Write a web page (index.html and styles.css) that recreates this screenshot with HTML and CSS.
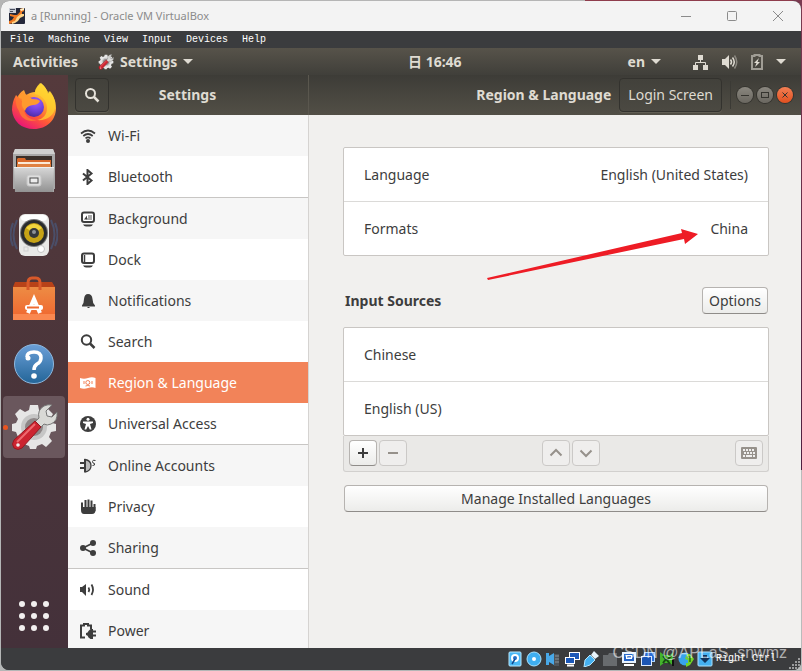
FILE: index.html
```
<!DOCTYPE html>
<html lang="en">
<head>
    <meta charset="utf-8">
    <meta name="viewport" content="width=device-width, initial-scale=1">
    <title>a [Running] - Oracle VM VirtualBox</title>
    <link rel="stylesheet" href="styles.css">
</head>
<body>
<div class="window">

    <!-- host window -->
    <header class="titlebar">
        <svg class="vm-logo" width="16" height="16" viewBox="0 0 16 16">
            <rect width="16" height="16" rx="1" fill="#25283a"/>
            <path d="M0 0h7v5H0z" fill="#c9ccd4"/>
            <path d="M1 1.500h5M1 3.500h3" stroke="#4a5060"/>
            <path d="M1 6l4 1h3l3-3V1l4-1v3l-2 1v3l-4 3-2 3-3 2-4 1v-3l3-1 2-3-4-1z" fill="#f07a22"/>
            <path d="M3 14l3-1 2-4 4-3 3 0v2l-4 2-2 3-3 2-3 1z" fill="#ffd58a"/>
            <path d="M11 1l4-1v2l-3 1z" fill="#fff0c8"/>
        </svg>
        <span class="titlebar-text">a [Running] - Oracle VM VirtualBox</span>
        <button class="win-btn" aria-label="Minimize">
            <svg width="12" height="12" viewBox="0 0 12 12"><path d="M1 6.500h10"/></svg>
        </button>
        <button class="win-btn" aria-label="Maximize">
            <svg width="12" height="12" viewBox="0 0 12 12"><rect x="1.500" y="1.500" width="9" height="9" rx="1"/></svg>
        </button>
        <button class="win-btn" aria-label="Close">
            <svg width="12" height="12" viewBox="0 0 12 12"><path d="M1 1l10 10M11 1L1 11"/></svg>
        </button>
    </header>

    <nav class="menubar">
        <button>File</button>
        <button>Machine</button>
        <button>View</button>
        <button>Input</button>
        <button>Devices</button>
        <button>Help</button>
    </nav>

    <!-- guest top bar -->
    <div class="topbar">
        <div class="topbar-left">
            <button class="top-btn">Activities</button>
            <button class="top-btn app-menu">
                <svg width="16" height="16" viewBox="0 0 48 48"><use href="#i-settings"/></svg>
                Settings
                <i class="caret"></i>
            </button>
        </div>
        <button class="top-btn clock">日 16:46</button>
        <div class="topbar-right">
            <button class="top-btn lang">en <i class="caret"></i></button>
            <button class="top-btn tray" aria-label="System menu">
                <svg width="16" height="16" viewBox="0 0 16 16">
                    <path d="M5 1h5v5H5zM0 11h5v5H0zM10 11h5v5h-5z" fill="#dfdbd2"/>
                    <path d="M7.500 6v3M2.500 11V8.500h10V11" fill="none" stroke="#dfdbd2"/>
                </svg>
                <svg width="16" height="16" viewBox="0 0 16 16">
                    <path d="M0 5h3l4-4v14l-4-4H0z" fill="#dfdbd2"/>
                    <path d="M8.500 5.500q2 2.500 0 5M10.500 3.500q3.500 4.500 0 9" fill="none" stroke="#dfdbd2" stroke-width="1.500"/>
                    <path d="M12.500 1.500q4.500 6.500 0 13" fill="none" stroke="#8b8880" stroke-width="1.500"/>
                </svg>
                <svg width="12" height="16" viewBox="0 0 12 16">
                    <path d="M3.500 2V1h5v1H11v13H1V2z" fill="none" stroke="#a09d95" stroke-width="2"/>
                    <path d="M8 4L3 9h2.500L4 13l5-5H6.500z" fill="#dfdbd2"/>
                </svg>
                <i class="caret"></i>
            </button>
        </div>
    </div>

    <div class="desktop">
        <aside class="dock">
            <a href="#" class="dock-item" aria-label="Firefox">
                <svg width="48" height="48" viewBox="0 0 48 48">
                    <defs>
                        <linearGradient id="ff" x1=".85" y1="0" x2=".25" y2="1">
                            <stop offset="0" stop-color="#fff44f"/><stop offset=".35" stop-color="#ffb030"/>
                            <stop offset=".65" stop-color="#ff5a36"/><stop offset="1" stop-color="#e8107c"/>
                        </linearGradient>
                        <radialGradient id="ffg" cx=".6" cy=".25" r=".8">
                            <stop offset="0" stop-color="#a35bff"/><stop offset=".6" stop-color="#6a3fd8"/><stop offset="1" stop-color="#4a2a9c"/>
                        </radialGradient>
                    </defs>
                    <path d="M6 12q-4 7-4 15c1 11 9 19 22 19s22-9 22-21c0-8-3-13-7-17l-1 3Q37 5 31 0q-5 4-6 9-2 0-5 1l-4 2-2-5q-5 3-6 7z" fill="url(#ff)"/>
                    <path d="M30 0q-6 6-5 11c5 1 12 5 12 14 0 7-4 11-10 12 9 1 17-4 18-12 1-7-2-13-5-17l-1 3Q36 4 30 0z" fill="#ffd32e" opacity=".75"/>
                    <circle cx="24" cy="24" r="10" fill="url(#ffg)"/>
                    <path d="M8 13q4-4 9-1l5 4q6 0 8 2-2 4-7 4-7 1-8 6-5-4-3-10-3-2-4-5z" fill="#ff9a2e"/>
                    <path d="M6 14q-1 9 3 14c2 8 10 12 18 9-7 0-13-4-13-11-3-4-3-8-2-10z" fill="#ff7a32" opacity=".8"/>
                </svg>
            </a>
            <a href="#" class="dock-item" aria-label="Files">
                <svg width="48" height="48" viewBox="0 0 48 48">
                    <defs>
                        <linearGradient id="fl" x1="0" y1="0" x2="0" y2="1"><stop offset="0" stop-color="#d8d8d8"/><stop offset="1" stop-color="#929292"/></linearGradient>
                    </defs>
                    <path d="M5 2h38l2 5v35h-1v3H5v-3H3V7z" fill="#a8a8a8"/>
                    <path d="M5 2h38l2 5H3z" fill="#cfcfcf"/>
                    <path d="M6 9h36v11H6z" fill="#3a302b"/>
                    <path d="M8 11h7l1 2h25v8H7v-9z" fill="#d8682a"/>
                    <path d="M8 15h32v2H8z" fill="#fbe8d4"/><path d="M7 17h34v3H7z" fill="#e08040"/>
                    <path d="M4 20h40l-1 25H5z" fill="url(#fl)"/>
                    <path d="M4 20.500h40" stroke="#efefef"/>
                    <rect x="17" y="28" width="14" height="11" rx="2" fill="#dedede" stroke="#c6c6c6"/>
                    <rect x="20" y="31" width="8" height="5" fill="#ececec" stroke="#4a4a4a"/>
                </svg>
            </a>
            <a href="#" class="dock-item" aria-label="Rhythmbox">
                <svg width="48" height="48" viewBox="0 0 48 48">
                    <g fill="none" stroke="#456596" stroke-width="2" opacity=".5">
                        <path d="M7 9q-7 15 0 29M3 12q-5 12 0 23M41 9q7 15 0 29M45 12q5 12 0 23"/>
                    </g>
                    <rect x="9" y="3" width="30" height="42" rx="6" fill="#e9e9e7"/>
                    <rect x="11" y="4" width="26" height="6" rx="4" fill="#fff"/>
                    <circle cx="24" cy="22" r="14" fill="#777"/><circle cx="24" cy="22" r="13" fill="#292b2d"/>
                    <circle cx="24" cy="22" r="10" fill="#c7a316"/><path d="M16 17q8-8 16 0l-8 5z" fill="#f0d43e"/>
                    <circle cx="24" cy="22" r="5" fill="#35373b"/><circle cx="24" cy="21" r="2" fill="#8e9298"/>
                    <circle cx="31" cy="38" r="3.500" fill="#fff" stroke="#c4c4c4"/><rect x="14" y="36" width="4" height="4" fill="none" stroke="#d0d0d0"/>
                </svg>
            </a>
            <a href="#" class="dock-item" aria-label="Ubuntu Software">
                <svg width="48" height="48" viewBox="0 0 48 48">
                    <defs>
                        <linearGradient id="sw" x1="0" y1="0" x2="0" y2="1"><stop offset="0" stop-color="#ed8c44"/><stop offset="1" stop-color="#f0642e"/></linearGradient>
                    </defs>
                    <path d="M5 7h37l3 5H3z" fill="#b84218"/>
                    <path d="M3 12h42v33H3z" fill="url(#sw)"/>
                    <path d="M3 39h42v6H3z" fill="#fa8850"/>
                    <path d="M18 15V8q0-5 4-5h4q4 0 4 5v7" fill="none" stroke="#d8592a" stroke-width="3"/>
                    <path d="M18 38l6-14 6 14" fill="none" stroke="#fff" stroke-width="4"/>
                    <rect x="15" y="30" width="18" height="5" rx="2" fill="#fff"/>
                    <path d="M17 32.500h12" stroke="#ef6b32" stroke-width="2"/>
                </svg>
            </a>
            <a href="#" class="dock-item" aria-label="Help">
                <svg width="48" height="48" viewBox="0 0 48 48">
                    <defs>
                        <linearGradient id="hp" x1="0" y1="0" x2="0" y2="1"><stop offset="0" stop-color="#6b9fd8"/><stop offset="1" stop-color="#236598"/></linearGradient>
                    </defs>
                    <circle cx="24" cy="25" r="19.500" fill="url(#hp)" stroke="#8fb9df"/>
                    <path d="M17 18q0-5 7-5 7 0 7 6 0 4-4 6-3 2-3 6" fill="none" stroke="#fff" stroke-width="3.500"/>
                    <circle cx="18" cy="19" r="2.500" fill="#fff"/><circle cx="24" cy="37" r="2.800" fill="#fff"/>
                </svg>
            </a>
            <a href="#" class="dock-item active" aria-label="Settings">
                <svg width="48" height="48" viewBox="0 0 48 48">
                    <g id="i-settings">
                        <path d="M20 2h8l1 5 4 2 5-3 5 5-3 5 2 4 4 1v7l-5 1-2 5 3 4-6 6-4-3-5 2-1 3h-6l-1-3-5-2-4 3-5-6 3-4-2-5-4-1v-7l4-1 2-4-3-5 5-5 5 3 4-2z" fill="#e6e6e6"/>
                        <circle cx="24" cy="24" r="13" fill="#c6c6c6"/><circle cx="24" cy="24" r="9" fill="#8e8788"/>
                        <path d="M29 15q-2-8 5-12 4-2 8-1l-6 6 1 5 5 1 5-5q1 9-6 12-4 2-7 0L15 40l-6-6 20-19z" fill="#d9d9d6" stroke="#777"/>
                        <path d="M25 18l6 6L12 45q-4 3-8 0-3-4 0-8z" fill="#cc2430" stroke="#941a22"/>
                        <path d="M25 21L7 39" stroke="#ef6b70" stroke-width="2"/>
                        <circle cx="8" cy="42" r="1.800" fill="#eee"/>
                    </g>
                </svg>
            </a>
            <a href="#" class="dock-item apps" aria-label="Show applications">
                <svg width="30" height="30" viewBox="0 0 30 30" fill="#f2f0ef">
                    <circle cx="3" cy="3" r="3"/><circle cx="15" cy="3" r="3"/><circle cx="27" cy="3" r="3"/>
                    <circle cx="3" cy="15" r="3"/><circle cx="15" cy="15" r="3"/><circle cx="27" cy="15" r="3"/>
                    <circle cx="3" cy="27" r="3"/><circle cx="15" cy="27" r="3"/><circle cx="27" cy="27" r="3"/>
                </svg>
            </a>
        </aside>

        <div class="settings">
            <section class="side">
                <div class="head head-side">
                    <button class="dark-btn search-btn" aria-label="Search">
                        <svg width="16" height="16" viewBox="0 0 16 16"><circle cx="6.500" cy="6.500" r="4.500" fill="none" stroke="#e6e2da" stroke-width="2"/><path d="M10 10l4.500 4.500" stroke="#e6e2da" stroke-width="2.500"/></svg>
                    </button>
                    <h1>Settings</h1>
                </div>
                <nav class="menu">
                    <a href="#">
                        <svg viewBox="0 0 16 16"><g fill="none" stroke="currentColor" stroke-width="1.700"><path d="M1 5.500q7-6 14 0M3.300 8q4.700-4 9.400 0M5.500 10.300q2.500-2 5 0"/></g><circle cx="8" cy="13" r="2" fill="currentColor"/></svg>
                        Wi-Fi</a>
                    <a href="#" class="last">
                        <svg viewBox="0 0 16 16"><path d="M3 4.500l8.500 7-4 3.500V1l4 3.500L3 11.500" fill="none" stroke="currentColor" stroke-width="2"/></svg>
                        Bluetooth</a>
                    <a href="#">
                        <svg viewBox="0 0 16 16"><rect x="2" y="1.500" width="12" height="9.500" rx="2" fill="#fff" stroke="currentColor" stroke-width="2"/><path d="M8 4h4v5H6.500V7H8z" fill="#aaa"/><path d="M4 8.500l3-4v4z" fill="currentColor"/><path d="M3 13.500h10q-1 2-3 2H6q-2 0-3-2z" fill="currentColor"/></svg>
                        Background</a>
                    <a href="#">
                        <svg viewBox="0 0 16 16"><rect x="2" y="1.500" width="12" height="9.500" rx="2" fill="none" stroke="currentColor" stroke-width="2"/><path d="M4.500 3v7" stroke="currentColor" stroke-width="1.500"/><path d="M3 13.500h10q-1 2-3 2H6q-2 0-3-2z" fill="currentColor"/></svg>
                        Dock</a>
                    <a href="#">
                        <svg viewBox="0 0 16 16"><path d="M8 1q4 0 4.500 5 0 4 2.500 6.500v1H2v-1Q4 10 4 6q.5-5 4-5zM7 14h3l-1 1H8z" fill="currentColor"/></svg>
                        Notifications</a>
                    <a href="#">
                        <svg viewBox="0 0 16 16"><circle cx="6.500" cy="6" r="4.700" fill="none" stroke="currentColor" stroke-width="2"/><path d="M10 9.500l4.500 4.500" stroke="currentColor" stroke-width="2.500"/></svg>
                        Search</a>
                    <a href="#" class="active">
                        <svg viewBox="0 0 16 16"><path d="M0 3q4 1.500 8 0t7.500 0v10q-3.500-1.500-7.500 0t-8 0z" fill="currentColor"/><g fill="none" stroke="#f28359" stroke-width="1"><circle cx="7.800" cy="7.500" r="2"/><path d="M4 6v3M12 6v3M5.500 11q2.500-1 4.500 0"/></g></svg>
                        Region &amp; Language</a>
                    <a href="#" class="last">
                        <svg viewBox="0 0 16 16"><circle cx="8" cy="8" r="8" fill="currentColor"/><circle cx="8" cy="3.300" r="1.500" fill="#fff"/><path d="M3 5.500h10v1.500L10 8l1.500 5.500h-1.700L8 10l-1.800 3.500H4.500L6 8 3 7z" fill="#fff"/></svg>
                        Universal Access</a>
                    <a href="#">
                        <svg viewBox="0 0 16 16"><path d="M0 5h4M0 10h4" stroke="currentColor" stroke-width="2"/><path d="M5 1.500q6 1 6 6.200t-6 6.300z" fill="#bbb" stroke="currentColor" stroke-width="1.300"/><path d="M5 1v13" stroke="currentColor" stroke-width="2"/><path d="M15.500 2.500q-3-1-3 1t2 2q1 2-2 2" fill="none" stroke="currentColor"/></svg>
                        Online Accounts</a>
                    <a href="#">
                        <svg viewBox="0 0 16 16"><path d="M2 3.500v7M5.500 1v9M8.500.5v9M11.500 1.500v9M14.500 5v7" stroke="currentColor" stroke-width="2"/><path d="M1 8h14.500v3q0 4-3.500 4H4q-3 0-3-4z" fill="currentColor"/></svg>
                        Privacy</a>
                    <a href="#" class="last">
                        <svg viewBox="0 0 16 16"><path d="M13 3L3 8l10 5" fill="none" stroke="currentColor" stroke-width="1.700"/><g fill="currentColor"><circle cx="13" cy="3" r="3"/><circle cx="3" cy="8" r="3"/><circle cx="13" cy="13" r="3"/></g></svg>
                        Sharing</a>
                    <a href="#">
                        <svg viewBox="0 0 16 16"><path d="M0 5h2l4-3v12l-4-4H0z" fill="currentColor"/><path d="M8.500 5.500q1.500 2.200 0 4.500M11.500 2.500q3 5 0 10.500" fill="none" stroke="currentColor" stroke-width="1.800"/></svg>
                        Sound</a>
                    <a href="#">
                        <svg viewBox="0 0 16 16"><path d="M5 14.500H1V2.500h3V1h4v1.500h3V6" fill="none" stroke="currentColor" stroke-width="2"/><path d="M6 10q2 0 2.500-2l2-2h2.500v1.500h3v2h-3v2h3v2h-3V16h-2.500l-2-1.500Q8 12 6 12z" fill="currentColor"/></svg>
                        Power</a>
                </nav>
            </section>

            <section class="main">
                <div class="head head-main">
                    <h2>Region &amp; Language</h2>
                    <button class="dark-btn">Login Screen</button>
                    <div class="controls">
                        <button class="ctl" aria-label="Minimize"><svg width="16" height="16" viewBox="0 0 16 16"><path d="M4 8.500h8"/></svg></button>
                        <button class="ctl" aria-label="Maximize"><svg width="16" height="16" viewBox="0 0 16 16"><rect x="4.500" y="5.500" width="7" height="5"/></svg></button>
                        <button class="ctl close" aria-label="Close"><svg width="16" height="16" viewBox="0 0 16 16"><path d="M5.500 5.500l5 5M10.500 5.500l-5 5"/></svg></button>
                    </div>
                </div>

                <div class="content">
                    <div class="list">
                        <button class="row">Language <span>English (United States)</span></button>
                        <button class="row">Formats <span>China</span></button>
                    </div>
                    <svg class="arrow" width="212" height="54" viewBox="0 0 212 54">
                        <path d="M0 50L195 5l-1-4 17 5-13 10-1-5L1 52z" fill="#ee1c25"/>
                    </svg>

                    <div class="section-head">
                        <h3>Input Sources</h3>
                        <button class="btn">Options</button>
                    </div>

                    <div class="list">
                        <button class="row">Chinese</button>
                        <button class="row">English (US)</button>
                    </div>
                    <div class="tools">
                        <div class="group">
                            <button class="btn tool" aria-label="Add"><svg viewBox="0 0 16 16"><path d="M3 8h10M8 3v10"/></svg></button>
                            <button class="btn tool" aria-label="Remove" disabled><svg viewBox="0 0 16 16"><path d="M3 8h10"/></svg></button>
                        </div>
                        <div class="group">
                            <button class="btn tool" aria-label="Move up" disabled><svg viewBox="0 0 16 16"><path d="M2.500 10.500L8 5l5.500 5.500"/></svg></button>
                            <button class="btn tool" aria-label="Move down" disabled><svg viewBox="0 0 16 16"><path d="M2.500 5.500L8 11l5.500-5.500"/></svg></button>
                        </div>
                        <button class="btn tool" aria-label="Keyboard layout" disabled>
                            <svg viewBox="0 0 16 16"><rect y="2" width="16" height="12" rx="1" fill="#96918b" stroke="none"/><g stroke="#f0efee" stroke-width="2"><path d="M2 5h12" stroke-dasharray="2 1"/><path d="M3 8h11" stroke-dasharray="2 1"/><path d="M2 11h2M5 11h6M12 11h2"/></g></svg>
                        </button>
                    </div>
                    <button class="btn wide">Manage Installed Languages</button>
                </div>
            </section>
        </div>
    </div>

    <footer class="statusbar">
        <div class="status-icons">
            <svg viewBox="0 0 16 16"><rect x="2" y="1" width="12" height="14" rx="1" fill="#4ab8f5" stroke="#b8e8ff"/><circle cx="8" cy="7" r="4" fill="#fff"/><circle cx="8" cy="7" r="2" fill="#2470c8"/><path d="M5 13l3-5" stroke="#124a90" stroke-width="1.500"/></svg>
            <svg viewBox="0 0 16 16"><circle cx="8" cy="8" r="7" fill="#3faef0" stroke="#a8e2ff"/><circle cx="8" cy="8" r="2" fill="#fff"/></svg>
            <svg viewBox="0 0 16 16"><path d="M1 2h3v12H1zM4 5l5-3v12l-5-3z" fill="#48a8e8"/><path d="M9 3h5v12H9z" fill="#4e545a"/><path d="M10 5h4M10 8h4M10 11h4" stroke="#8a9298"/></svg>
            <svg viewBox="0 0 16 16"><rect x="5.500" y="1.500" width="10" height="7" fill="#1c58b8" stroke="#fff"/><rect x="1.500" y="6.500" width="9" height="6" fill="#1c58b8" stroke="#fff"/><path d="M3 14.500h7" stroke="#fff" stroke-width="2"/></svg>
            <svg viewBox="0 0 16 16"><path d="M11 0l5 5-4 3-4-4z" fill="#e8f4fb"/><path d="M7 4l5 5-5 5-6 2 1-7z" fill="#45b0f0" stroke="#b5e6ff"/></svg>
            <svg viewBox="0 0 16 16"><path d="M1 4h5l1-2h8v13H1z" fill="#686b6e"/></svg>
            <svg viewBox="0 0 16 16"><rect x="1" y="1" width="14" height="11" fill="#e8f3ff"/><rect x="3" y="3" width="10" height="7" fill="#2464c8"/><rect x="5.500" y="4.500" width="5" height="3" fill="none" stroke="#fff"/><path d="M3 14h10" stroke="#fff" stroke-width="2"/></svg>
            <svg viewBox="0 0 16 16"><rect x="4.500" y="1.500" width="10" height="9" fill="#2b6bd2" stroke="#acd4ff"/><rect x="1.500" y="5.500" width="10" height="9" fill="#1b55b5" stroke="#dceaff"/></svg>
            <svg viewBox="0 0 16 16"><path d="M1 1l4 3h6l3-3v13l-4-2H5l-4 3z" fill="#44b32c"/><path d="M4 5l3 3-3 4M12 5L8 9l3 4" stroke="#164d10" stroke-width="2" fill="none"/><path d="M13 8h2v7h-2z" fill="#111"/></svg>
            <svg viewBox="0 0 16 16"><circle cx="7" cy="8" r="6.500" fill="#37a4ec"/><path d="M9 3h3l4 5-4 6-4 2v-4h2V9L7 8z" fill="#73d32b"/><path d="M9 6h3v5" stroke="#226d16" stroke-width="1.500" fill="none"/></svg>
            <svg viewBox="0 0 16 16"><rect x="1" y="1" width="14" height="14" rx="1" fill="#45b0f0" stroke="#abe2ff"/><path d="M3 7h10l-5 5zM6 4h4v3H6z" fill="#12345c"/></svg>
        </div>
        <span class="host-key">Right Ctrl</span>
        <svg class="grip" width="12" height="12" viewBox="0 0 12 12" fill="#9a9b9c"><path d="M9 0h2v2H9zM6 3h2v2H6zM9 3h2v2H9zM3 6h2v2H3zM6 6h2v2H6zM9 6h2v2H9zM0 9h2v2H0zM3 9h2v2H3zM6 9h2v2H6zM9 9h2v2H9z"/></svg>
        <span class="watermark">CSDN @APLaS_snwmz</span>
    </footer>
</div>
</body>
</html>
```
FILE: styles.css
```
* {
    box-sizing: border-box;
}

html, body {
    margin: 0;
    height: 100%;
}

body {
    padding: 1px;
    font-family: "Noto Sans", "Noto Sans CJK SC", sans-serif;
    font-size: 14px;
    line-height: 20px;
    color: #3d3d3d;
    overflow: hidden;
    background: linear-gradient(#7a3a50, #4e2040 70%, #b9bbbb 70%) right / 10px 100% no-repeat,
        linear-gradient(to right, #b5b5b5 73%, #8e3c4c 73%) top / 100% 10px no-repeat,
        #b4b6b6;
}

button {
    font: inherit;
    color: inherit;
    border: 0;
    padding: 0;
    background: none;
}

a {
    color: inherit;
    text-decoration: none;
}

h1, h2, h3 {
    margin: 0;
    font-size: 14px;
    font-weight: 700;
}

svg {
    display: block;
    flex: none;
}

.window {
    height: 100%;
    display: flex;
    flex-direction: column;
    border-radius: 8px;
    overflow: hidden;
    background: #3b3c3e;
}

/* virtualbox title + menu */
.titlebar {
    flex: none;
    height: 30px;
    display: flex;
    align-items: center;
    padding-left: 8px;
    background: #f3f3f3;
    color: #8b8b8b;
}

.titlebar-text {
    flex: 1;
    margin-left: 6px;
    font-size: 11px;
}

.win-btn {
    width: 46px;
    height: 30px;
    display: flex;
    align-items: center;
    justify-content: center;
}

.win-btn svg {
    fill: none;
    stroke: #8b8b8b;
}

.menubar {
    flex: none;
    height: 17px;
    display: flex;
    gap: 14px;
    padding-left: 9px;
    background: #3b3c3e;
    color: #fff;
    font-family: "Liberation Mono", monospace;
    font-size: 10px;
    line-height: 17px;
}

/* gnome top bar */
.topbar {
    flex: none;
    height: 27px;
    display: grid;
    grid-template-columns: calc(50% + 7px) auto 1fr;
    align-items: center;
    color: #dfdbd2;
    font-weight: 700;
    background: linear-gradient(#57534a, #403f3a);
}

.topbar-left, .topbar-right, .top-btn {
    display: flex;
    align-items: center;
}

.topbar-left {
    padding-left: 12px;
    gap: 20px;
}

.topbar-right {
    justify-content: flex-end;
    padding-right: 15px;
    gap: 32px;
}

.app-menu, .lang {
    gap: 6px;
}

.tray {
    gap: 13px;
}

.caret {
    border: 5px solid transparent;
    border-top-color: #dfdbd2;
    border-bottom: 0;
}

.desktop {
    flex: 1;
    min-height: 0;
    display: flex;
}

.dock {
    width: 67px;
    display: flex;
    flex-direction: column;
    gap: 2px;
    padding: 1px 3px 1px 2px;
    background: linear-gradient(#553a3c, #49343a 60%, #44313a);
}

.dock-item {
    position: relative;
    height: 62px;
    display: flex;
    align-items: center;
    justify-content: center;
    border-radius: 4px;
}

.dock-item.active {
    background: #6a575d;
}

.dock-item.active::before {
    content: "";
    position: absolute;
    left: 0;
    width: 5px;
    height: 5px;
    border-radius: 50%;
    background: #e95420;
}

.apps {
    margin-top: auto;
}

/* settings window */
.settings {
    flex: 1;
    min-width: 0;
    display: flex;
    background: #f1f0ee;
}

.side {
    width: 241px;
    display: flex;
    flex-direction: column;
    border-right: 1px solid #d5d3d1;
    background: #fff;
}

.main {
    flex: 1;
    min-width: 0;
}

.head {
    flex: none;
    height: 40px;
    display: flex;
    align-items: center;
    color: #dfdbd2;
    background: linear-gradient(#3d3c37, #524f46);
}

.head-side {
    margin-right: -1px;
    padding: 0 42px 0 7px;
    border-right: 1px solid #5a574e;
}

.head-side h1 {
    flex: 1;
    text-align: center;
}

.head-main {
    justify-content: flex-end;
    gap: 8px;
    padding-right: 8px;
}

.dark-btn {
    height: 34px;
    padding: 0 8px;
    border: 1px solid #33322e;
    border-radius: 4px;
    background: linear-gradient(#42413b, #4b4942);
    box-shadow: 0 1px 0 #615e54;
}

.search-btn {
    width: 34px;
}

.controls {
    display: flex;
    align-items: center;
    gap: 4px;
    height: 28px;
    padding-left: 6px;
    border-left: 1px solid #3b3a35;
}

.ctl {
    width: 16px;
    height: 16px;
    border-radius: 50%;
    background: linear-gradient(#8a877f, #6a6760);
    box-shadow: 0 0 0 1px #35342f;
}

.ctl svg {
    fill: none;
    stroke: #35342f;
}

.ctl.close {
    background: linear-gradient(#f27f54, #e2501f);
}

.menu {
    flex: 1;
    min-height: 0;
    overflow: hidden;
}

.menu a {
    height: 41px;
    display: flex;
    align-items: center;
    gap: 12px;
    padding-left: 12px;
}

.menu svg {
    width: 16px;
    height: 16px;
}

.menu a:nth-child(odd) {
    background: #f6f6f6;
}

.menu a.last {
    height: 42px;
    border-bottom: 1px solid #c8c6c4;
}

.menu a.active {
    color: #fff;
    background: #f28359;
}

.content {
    position: relative;
    padding: 32px 32px 32px 34px;
}

.list {
    border: 1px solid #c9c6c3;
    border-radius: 2px;
    background: #fff;
}

.row {
    width: 100%;
    height: 53px;
    display: flex;
    align-items: center;
    justify-content: space-between;
    padding: 0 20px;
}

.row + .row {
    height: 54px;
    border-top: 1px solid #dbdad8;
}

/* pointer drawn over the rows */
.arrow {
    position: absolute;
    top: 113px;
    right: 102px;
}

.section-head {
    display: flex;
    align-items: center;
    justify-content: space-between;
    padding: 31px 1px 13px 2px;
}

.btn {
    height: 27px;
    padding: 0 6px;
    border: 1px solid #b6b3b0;
    border-bottom-color: #8f8c89;
    border-radius: 4px;
    background: linear-gradient(#fff, #ececea);
}

.tools {
    display: flex;
    justify-content: space-between;
    padding: 4px 5px 5px;
    border: 1px solid #d2d0ce;
    border-top: 0;
    border-radius: 0 0 3px 3px;
    background: #eae9e7;
}

.group {
    display: flex;
    gap: 2px;
}

.tool {
    width: 28px;
    height: 26px;
    display: flex;
    align-items: center;
    justify-content: center;
}

.tool svg {
    width: 16px;
    height: 16px;
    fill: none;
    stroke: #3d3d3d;
    stroke-width: 2;
}

.tool:disabled {
    border-color: #cbc9c7;
    background: #efeeed;
}

.tool:disabled svg {
    stroke: #96918b;
}

.wide {
    display: block;
    width: calc(100% - 2px);
    margin: 13px 1px 0;
}

/* vm status bar */
.statusbar {
    position: relative;
    flex: none;
    height: 22px;
    display: flex;
    align-items: center;
    justify-content: flex-end;
    background: #3b3c3e;
    color: #fff;
}

.status-icons {
    display: flex;
    gap: 3px;
}

.status-icons svg {
    width: 16px;
    height: 16px;
}

.host-key {
    margin: 0 13px 0 3px;
    font-family: "Liberation Mono", monospace;
    font-size: 10px;
}

.grip {
    align-self: flex-end;
}

.watermark {
    position: absolute;
    right: 14px;
    bottom: 7px;
    font-family: "Liberation Sans", sans-serif;
    font-size: 16px;
    color: rgba(255, 255, 255, .6);
}
```
